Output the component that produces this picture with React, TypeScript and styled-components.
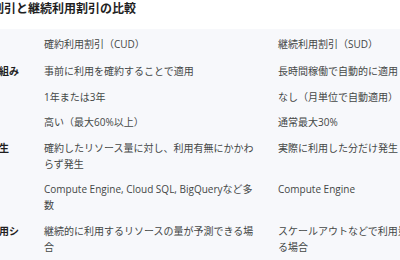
import styled, { createGlobalStyle } from 'styled-components'

const GlobalStyle = createGlobalStyle`
	html, body {
		margin: 0;
		padding: 0;
		background: #ffffff;
		overflow: hidden;
	}
	body {
		font-family: 'Open Sans', 'Noto Sans CJK JP', sans-serif;
	}
`

type RowType = {
	label: string
	cud: string
	sud: string
}

const rows: RowType[] = [
	{ label: '割引の仕組み', cud: '事前に利用を確約することで適用', sud: '長時間稼働で自動的に適用' },
	{ label: '契約期間', cud: '1年または3年', sud: 'なし（月単位で自動適用）' },
	{ label: '割引率', cud: '高い（最大60%以上）', sud: '通常最大30%' },
	{
		label: '料金の発生',
		cud: '確約したリソース量に対し、利用有無にかかわらず発生',
		sud: '実際に利用した分だけ発生',
	},
	{
		label: '主な対象',
		cud: 'Compute Engine, Cloud SQL, BigQueryなど多数',
		sud: 'Compute Engine',
	},
	{
		label: '適した利用シーン',
		cud: '継続的に利用するリソースの量が予測できる場合',
		sud: 'スケールアウトなどで利用量が変動する場合',
	},
]

export default function App() {
	return (
		<>
			<GlobalStyle />
			<Page>
				<Title>確約利用割引と継続利用割引の比較</Title>
				<Table>
					<Row $head>
						<Cell $label>項目</Cell>
						<Cell>確約利用割引（CUD）</Cell>
						<Cell>継続利用割引（SUD）</Cell>
					</Row>
					{rows.map((r) => (
						<Row key={r.label}>
							<Cell $label>{r.label}</Cell>
							<Cell>{r.cud}</Cell>
							<Cell>{r.sud}</Cell>
						</Row>
					))}
				</Table>
			</Page>
		</>
	)
}

const Page = styled.div`
	width: 600px;
	margin-left: -49px;
`
const Title = styled.h2`
	margin: 0 0 11px -7px;
	font-size: 12px;
	line-height: 18px;
	font-weight: 700;
	color: #1f1f1f;
`
const Table = styled.div`
	background: #f7f8fb;
	width: 511px;
`
const Row = styled.div<{ $head?: boolean }>`
	display: grid;
	grid-template-columns: 85px 234px 192px;
	padding: ${(p) => (p.$head ? '6.5px 0' : '5px 0 4.6px')};
`
const Cell = styled.div<{ $label?: boolean }>`
	padding: 0 8px;
	font-size: 10px;
	line-height: 16px;
	font-weight: ${(p) => (p.$label ? 700 : 400)};
	color: ${(p) => (p.$label ? '#1f1f1f' : '#444746')};
`
